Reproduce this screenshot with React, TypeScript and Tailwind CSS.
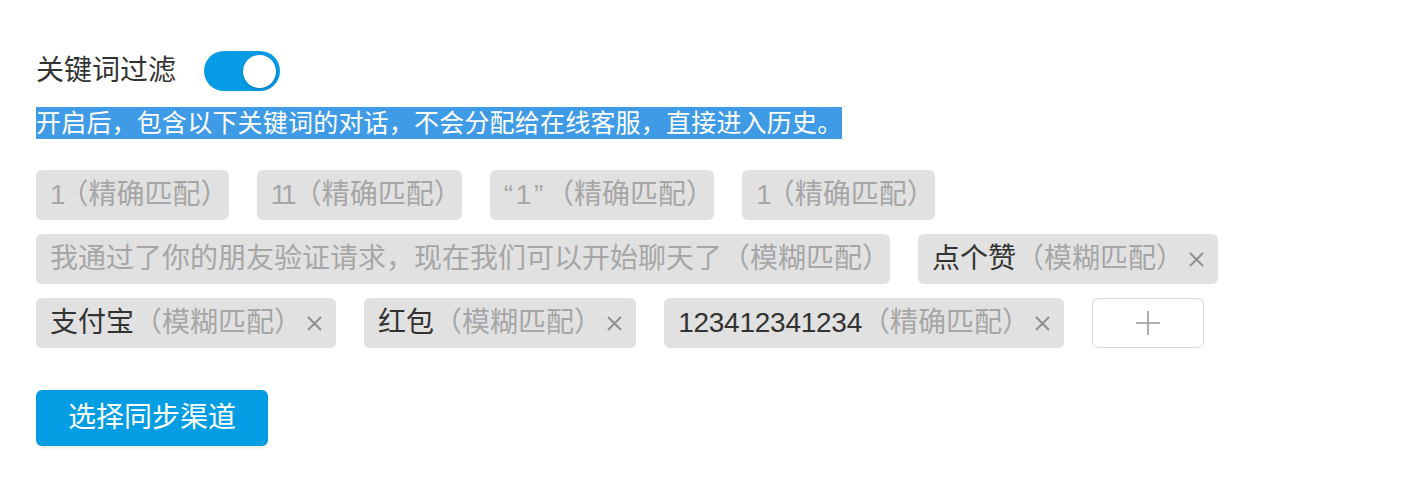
import React from "react";

const FONT = '"Liberation Sans", "Noto Sans CJK SC", sans-serif';

type Tag = { word: string; mode: string; disabled?: boolean; wordClass?: string };

const rows: Tag[][] = [
  [
    { word: "1", mode: "精确匹配", disabled: true, wordClass: "tracking-[-5px]" },
    { word: "11", mode: "精确匹配", disabled: true, wordClass: "tracking-[-3px]" },
    { word: "“1”", mode: "精确匹配", disabled: true, wordClass: "tracking-[2.7px]" },
    { word: "1", mode: "精确匹配", disabled: true, wordClass: "tracking-[-5px]" },
  ],
  [
    { word: "我通过了你的朋友验证请求，现在我们可以开始聊天了", mode: "模糊匹配", disabled: true },
    { word: "点个赞", mode: "模糊匹配" },
  ],
  [
    { word: "支付宝", mode: "模糊匹配" },
    { word: "红包", mode: "模糊匹配" },
    { word: "123412341234", mode: "精确匹配", wordClass: "tracking-[-0.25px]" },
  ],
];

function TagChip({ tag }: { tag: Tag }) {
  return (
    <div className="flex h-[50px] shrink-0 items-center whitespace-nowrap rounded-[6px] bg-[#e1e1e1] pl-[14px] pr-[14px] text-[28px] leading-none">
      <span className={(tag.disabled ? "text-[#a6a6a6] " : "text-[#333333] ") + (tag.wordClass ?? "")}>{tag.word}</span>
      <span className="text-[#a6a6a6]">（{tag.mode}</span>
      <span className="mr-[-14px] text-[#a6a6a6]">）</span>
      {!tag.disabled && (
        <svg width="15" height="15" viewBox="0 0 15 15" className="ml-[19px] shrink-0">
          <path d="M1 1 L14 14 M14 1 L1 14" stroke="#8f8f8f" strokeWidth="2" fill="none" />
        </svg>
      )}
    </div>
  );
}

export default function App() {
  return (
    <div className="min-h-[488px] w-[1416px] bg-white pl-[36px] pt-[51px]" style={{ fontFamily: FONT }}>
      <div className="flex items-center">
        <span className="text-[28px] leading-[40px] text-[#333333]">关键词过滤</span>
        <div className="ml-[28px] flex h-[40px] w-[76px] items-center justify-end rounded-full bg-[#069ce5] pr-[4px]">
          <div className="h-[33px] w-[33px] rounded-full bg-white shadow-[0_1px_3px_rgba(0,0,0,0.25)]" />
        </div>
      </div>
      <div className="mt-[16px] flex">
        <span className="bg-[#409be6] text-[25px] leading-[32px] tracking-[0.2px] text-white">
          开启后，包含以下关键词的对话，不会分配给在线客服，直接进入历史。
        </span>
      </div>
      <div className="mt-[31px] flex flex-col gap-[14px]">
        {rows.map((row, i) => (
          <div key={i} className="flex gap-[28px]">
            {row.map((t, j) => (
              <TagChip key={j} tag={t} />
            ))}
            {i === 2 && (
              <div className="flex h-[50px] w-[112px] items-center justify-center rounded-[6px] border border-[#d9d9d9] bg-white">
                <svg width="26" height="26" viewBox="0 0 26 26">
                  <path d="M13 1 V25 M1 13 H25" stroke="#999999" strokeWidth="1.6" fill="none" />
                </svg>
              </div>
            )}
          </div>
        ))}
      </div>
      <button className="mt-[42px] flex h-[56px] w-[232px] items-center justify-center rounded-[6px] bg-[#039de4] text-[28px] text-white shadow-[0_2px_3px_rgba(0,0,0,0.08)]">
        选择同步渠道
      </button>
    </div>
  );
}
